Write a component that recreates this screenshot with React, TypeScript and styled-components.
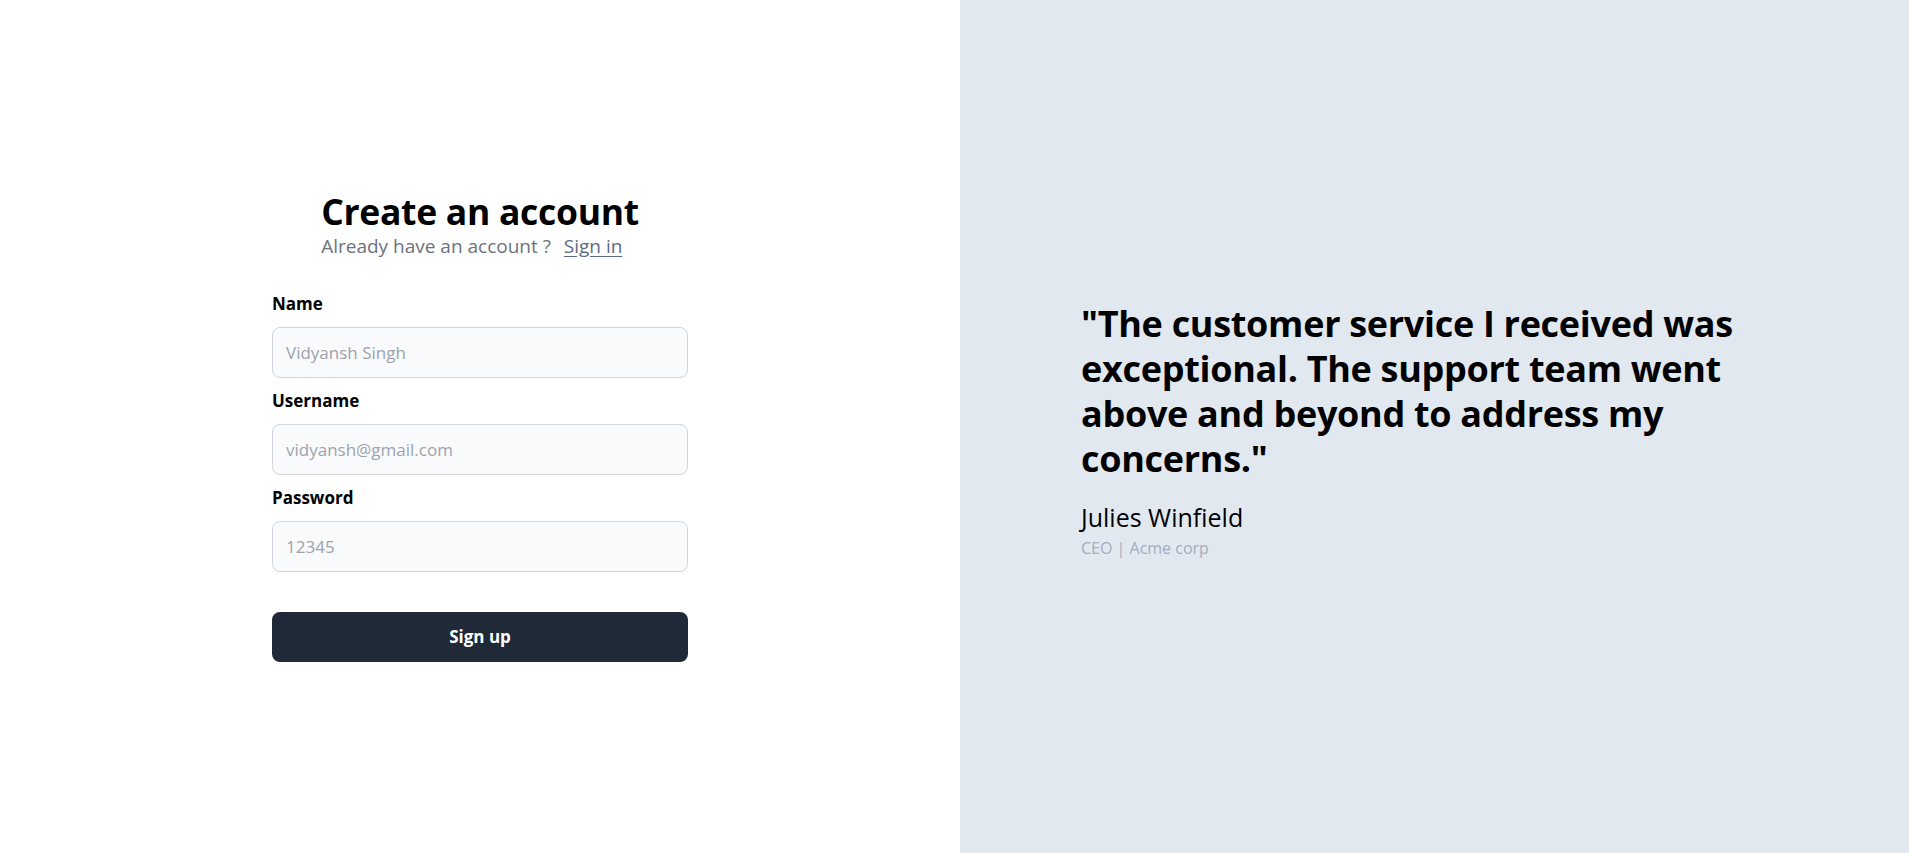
import React from "react";
import styled, { createGlobalStyle } from "styled-components";

const GlobalStyle = createGlobalStyle`
  html, body { margin: 0; padding: 0; }
  body {
    font-family: "Open Sans", "Noto Sans", sans-serif;
    color: #000;
    background: #fff;
  }
  * { box-sizing: border-box; }
`;

const Page = styled.div`
  display: grid;
  grid-template-columns: 960px 1fr;
  height: 853px;
`;

const FormPanel = styled.section`
  display: flex;
  align-items: center;
  justify-content: center;
  padding-bottom: 2px;
  background: #ffffff;
`;

const FormBox = styled.div`
  width: 416px;
  display: flex;
  flex-direction: column;
`;

const Header = styled.div`
  align-self: center;
  display: flex;
  flex-direction: column;
  margin-bottom: 32px;
`;

const Title = styled.h1`
  margin: 0;
  font-size: 35.5px;
  line-height: 42px;
  font-weight: 700;
  letter-spacing: -0.3px;
`;

const Subtitle = styled.p`
  margin: 0;
  font-size: 19px;
  line-height: 28px;
  color: #6b7280;
`;

const SignInLink = styled.a`
  margin-left: 8px;
  color: #5b6b82;
  text-decoration: underline;
  text-underline-offset: 3px;
  cursor: pointer;
`;

const Field = styled.div`
  display: flex;
  flex-direction: column;
  gap: 11px;
  margin-bottom: 11px;
`;

const Label = styled.label`
  font-size: 17px;
  line-height: 24px;
  font-weight: 700;
`;

const Input = styled.input`
  height: 51px;
  width: 100%;
  padding: 0 13px;
  border: 1px solid #d1d5db;
  border-radius: 8px;
  background: #f9fafb;
  font-family: inherit;
  font-size: 17px;
  color: #111827;
  outline: none;
  &::placeholder { color: #9ca3af; }
`;

const Button = styled.button`
  margin-top: 29px;
  height: 50px;
  width: 100%;
  border: none;
  border-radius: 8px;
  background: #1f2937;
  color: #fff;
  font-family: inherit;
  font-size: 17px;
  font-weight: 700;
  cursor: pointer;
`;

const QuotePanel = styled.section`
  display: flex;
  align-items: center;
  background: #e2e8f0;
  padding: 8px 0 0 121px;
`;

const QuoteBox = styled.div`
  width: 680px;
  display: flex;
  flex-direction: column;
`;

const Quote = styled.blockquote`
  margin: 0 0 20px;
  font-size: 36px;
  line-height: 45px;
  font-weight: 700;
  letter-spacing: -0.3px;
`;

const Author = styled.div`
  font-size: 25px;
  line-height: 32px;
  font-weight: 400;
  margin-bottom: 3px;
`;

const Role = styled.div`
  font-size: 16px;
  line-height: 24px;
  font-weight: 400;
  color: #a0aec0;
`;

export default function App() {
  return (
    <>
      <GlobalStyle />
      <Page>
        <FormPanel>
          <FormBox>
            <Header>
              <Title>Create an account</Title>
              <Subtitle>
                Already have an account ? <SignInLink>Sign in</SignInLink>
              </Subtitle>
            </Header>
            <Field>
              <Label>Name</Label>
              <Input placeholder="Vidyansh Singh" />
            </Field>
            <Field>
              <Label>Username</Label>
              <Input placeholder="vidyansh@gmail.com" />
            </Field>
            <Field>
              <Label>Password</Label>
              <Input type="password" placeholder="12345" />
            </Field>
            <Button>Sign up</Button>
          </FormBox>
        </FormPanel>
        <QuotePanel>
          <QuoteBox>
            <Quote>
              "The customer service I received was exceptional. The support team went
              above and beyond to address my concerns."
            </Quote>
            <Author>Julies Winfield</Author>
            <Role>CEO | Acme corp</Role>
          </QuoteBox>
        </QuotePanel>
      </Page>
    </>
  );
}
